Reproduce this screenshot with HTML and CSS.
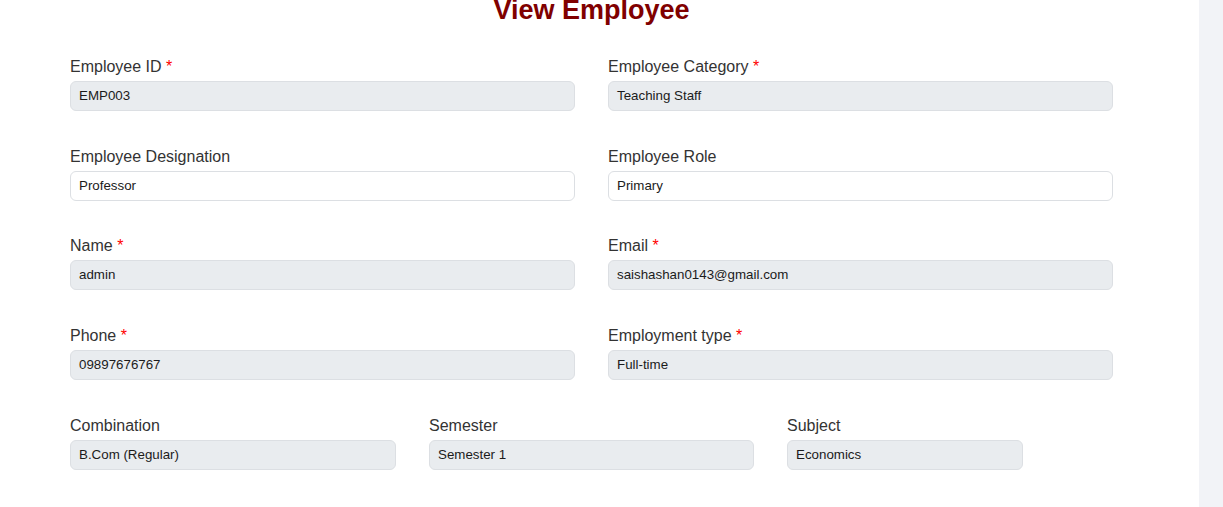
FILE: index.html
```html
<!DOCTYPE html>
<html lang="en">
<head>
<meta charset="utf-8">
<title>View Employee</title>
<link rel="stylesheet" href="styles.css">
</head>
<body>
<div class="layout">
  <main class="main">
    <div class="container">
      <h1 class="title">View Employee</h1>
      <div class="grid two">
        <div class="field">
          <label class="label">Employee ID <span class="req">*</span></label>
          <div class="input ro">EMP003</div>
        </div>
        <div class="field">
          <label class="label">Employee Category <span class="req">*</span></label>
          <div class="input ro">Teaching Staff</div>
        </div>
        <div class="field">
          <label class="label">Employee Designation</label>
          <div class="input">Professor</div>
        </div>
        <div class="field">
          <label class="label">Employee Role</label>
          <div class="input">Primary</div>
        </div>
        <div class="field">
          <label class="label">Name <span class="req">*</span></label>
          <div class="input ro">admin</div>
        </div>
        <div class="field">
          <label class="label">Email <span class="req">*</span></label>
          <div class="input ro">saishashan0143@gmail.com</div>
        </div>
        <div class="field">
          <label class="label">Phone <span class="req">*</span></label>
          <div class="input ro">09897676767</div>
        </div>
        <div class="field">
          <label class="label">Employment type <span class="req">*</span></label>
          <div class="input ro">Full-time</div>
        </div>
      </div>
      <div class="grid three">
        <div class="field">
          <label class="label">Combination</label>
          <div class="input ro">B.Com (Regular)</div>
        </div>
        <div class="field">
          <label class="label">Semester</label>
          <div class="input ro">Semester 1</div>
        </div>
        <div class="field">
          <label class="label">Subject</label>
          <div class="input ro">Economics</div>
        </div>
      </div>
    </div>
  </main>
  <aside class="side"></aside>
</div>
</body>
</html>
```
FILE: styles.css
```css
* { box-sizing: border-box; }
html, body { margin: 0; padding: 0; }
body {
  font-family: "Liberation Sans", Arial, sans-serif;
  background: #ffffff;
  color: #212529;
  height: 507px;
  overflow: hidden;
}
.layout {
  display: flex;
  height: 507px;
}
.main {
  flex: 1;
  background: #ffffff;
}
.side {
  width: 24px;
  background: #f2f3f7;
}
.container {
  width: 1043px;
  margin-left: 70px;
}
.title {
  margin: 0;
  font-size: 27px;
  line-height: 20px;
  font-weight: bold;
  color: #800000;
  text-align: center;
  height: 20px;
}
.grid {
  display: grid;
  column-gap: 33px;
  row-gap: 34.5px;
}
.grid.two {
  grid-template-columns: 505px 505px;
  margin-top: 36px;
}
.grid.three {
  grid-template-columns: 326px 325px 236px;
  margin-top: 35px;
}
.field {
  display: flex;
  flex-direction: column;
}
.label {
  font-size: 16px;
  line-height: 20px;
  padding-top: 1px;
  color: #333333;
  margin-bottom: 4px;
}
.req { color: #ff0000; }
.input {
  height: 30px;
  border: 1px solid #dcdfe3;
  border-radius: 6px;
  background: #ffffff;
  font-size: 13.333px;
  line-height: 28px;
  padding: 0 8px;
  color: #1b1b1b;
}
.input.ro {
  background: #e9ecef;
}
```
